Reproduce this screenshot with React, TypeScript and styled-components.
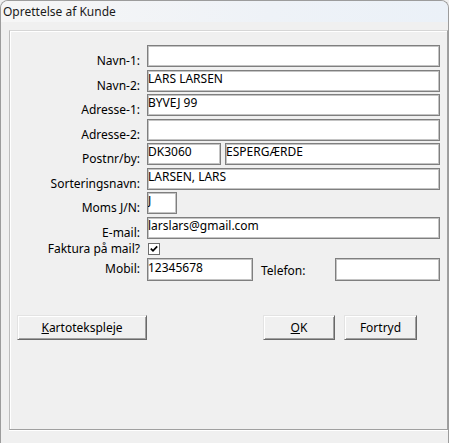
import React, { FC, ReactNode } from 'react';
import styled, { createGlobalStyle } from 'styled-components';

const GlobalStyle = createGlobalStyle`
  html, body {
    margin: 0;
    padding: 0;
    background: #f0f0f0;
  }
  * {
    box-sizing: border-box;
  }
`;

const StyledWindow = styled.div`
  width: 449px;
  height: 443px;
  display: flex;
  flex-direction: column;
  background: #f0f0f0;
  border: 1px solid #9c9c9c;
  border-bottom: none;
  border-radius: 8px 8px 0 0;
  overflow: hidden;
  font-family: 'Noto Sans', 'Open Sans', sans-serif;
  font-size: 12px;
  color: #000;
`;

const StyledTitleBar = styled.div`
  height: 21px;
  display: flex;
  align-items: center;
  padding: 0 0 1px 2px;
  background: linear-gradient(90deg, #f6f6f6 0%, #eef2f7 60%, #ebf1f8 100%);
  color: #1b1b1b;
`;

const StyledBody = styled.div`
  flex: 1;
  display: flex;
  padding: 8px 0 13px 8px;
`;

// etched group frame around the whole form
const StyledPanel = styled.div`
  flex: 1;
  display: flex;
  flex-direction: column;
  padding: 14px 0 0 0;
  border: 1px solid #a0a0a0;
  border-top-color: #d6d6d6;
  border-left-color: #bdbdbd;
  box-shadow: inset 1px 1px 0 #fff, 0 1px 0 #fff;
`;

const StyledRow = styled.div<{ $height?: number; $gap?: number }>`
  display: flex;
  align-items: flex-end;
  height: ${({ $height = 22 }) => $height}px;
  margin-bottom: ${({ $gap = 2.5 }) => $gap}px;
`;

const StyledLabel = styled.label<{ $lift?: number }>`
  width: 137px;
  padding: 0 7px ${({ $lift = 0 }) => $lift}px 0;
  text-align: right;
  line-height: 12px;
  white-space: nowrap;
`;

const StyledInlineLabel = styled.label<{ $lift?: number }>`
  width: 82px;
  padding: 0 0 ${({ $lift = 0 }) => $lift}px 8px;
  line-height: 12px;
  white-space: nowrap;
`;

const StyledInput = styled.input<{ $width: number }>`
  width: ${({ $width }) => $width}px;
  height: 100%;
  margin: 0;
  padding: 0 0 5px 0;
  font: inherit;
  color: #000;
  background: #fff;
  border: 1px solid #7f7f7f;
  box-shadow: inset 0 0 0 1px #c4c4c4;
  border-radius: 0;
  outline: none;
`;

const StyledCheckbox = styled.span`
  width: 12px;
  height: 12px;
  margin-left: 1px;
  display: flex;
  align-items: center;
  justify-content: center;
  background: #fff;
  border: 1px solid #6d6d6d;
`;

const StyledButtonRow = styled.div`
  display: flex;
  justify-content: space-between;
  margin-top: 34px;
  padding: 0 30px 0 7px;
`;

const StyledButtonGroup = styled.div`
  display: flex;
  gap: 9px;
`;

const StyledButton = styled.button<{ $width: number }>`
  width: ${({ $width }) => $width}px;
  height: 25px;
  padding: 0;
  font: inherit;
  color: #000;
  background: #f0f0f0;
  border: 1px solid;
  border-color: #e3e3e3 #696969 #696969 #e3e3e3;
  box-shadow: inset 1px 1px 0 #fff, inset -1px -1px 0 #a0a0a0;
  u {
    text-underline-offset: 1px;
  }
`;

interface FieldRowProps {
  label: string;
  value?: string;
  width?: number;
  lift?: number;
  children?: ReactNode;
}

const FieldRow: FC<FieldRowProps> = ({ label, value = '', width = 293, lift, children }) => (
  <StyledRow>
    <StyledLabel $lift={lift}>{label}</StyledLabel>
    {children ?? <StyledInput $width={width} defaultValue={value} readOnly />}
  </StyledRow>
);

const CheckMark = () => (
  <svg width="8" height="8" viewBox="0 0 8 8">
    <path d="M0.8 3.6 L3 5.8 L7.2 1.4" fill="none" stroke="#000" strokeWidth="1.7" />
  </svg>
);

export default function App() {
  return (
    <>
      <GlobalStyle />
      <StyledWindow>
        <StyledTitleBar>Oprettelse af Kunde</StyledTitleBar>
        <StyledBody>
          <StyledPanel>
            <FieldRow label="Navn-1:" />
            <FieldRow label="Navn-2:" value="LARS LARSEN" />
            <FieldRow label="Adresse-1:" value="BYVEJ 99" />
            <FieldRow label="Adresse-2:" />
            <FieldRow label="Postnr/by:">
              <StyledInput $width={74} defaultValue="DK3060" readOnly />
              <StyledInput $width={215} defaultValue="ESPERGÆRDE" readOnly style={{ marginLeft: 4 }} />
            </FieldRow>
            <FieldRow label="Sorteringsnavn:" value="LARSEN, LARS" />
            <FieldRow label="Moms J/N:" value="J" width={30} />
            <StyledRow $gap={4.5}>
              <StyledLabel>E-mail:</StyledLabel>
              <StyledInput $width={293} defaultValue="larslars@gmail.com" readOnly />
            </StyledRow>
            <StyledRow $height={12} $gap={3}>
              <StyledLabel $lift={0}>Faktura på mail?</StyledLabel>
              <StyledCheckbox>
                <CheckMark />
              </StyledCheckbox>
            </StyledRow>
            <StyledRow $height={23} $gap={0}>
              <StyledLabel $lift={6}>Mobil:</StyledLabel>
              <StyledInput $width={106} defaultValue="12345678" readOnly />
              <StyledInlineLabel $lift={4}>Telefon:</StyledInlineLabel>
              <StyledInput $width={105} readOnly />
            </StyledRow>
            <StyledButtonRow>
              <StyledButton $width={130}>
                <u>K</u>artotekspleje
              </StyledButton>
              <StyledButtonGroup>
                <StyledButton $width={72}>
                  <u>O</u>K
                </StyledButton>
                <StyledButton $width={73}>Fortryd</StyledButton>
              </StyledButtonGroup>
            </StyledButtonRow>
          </StyledPanel>
        </StyledBody>
      </StyledWindow>
    </>
  );
}
